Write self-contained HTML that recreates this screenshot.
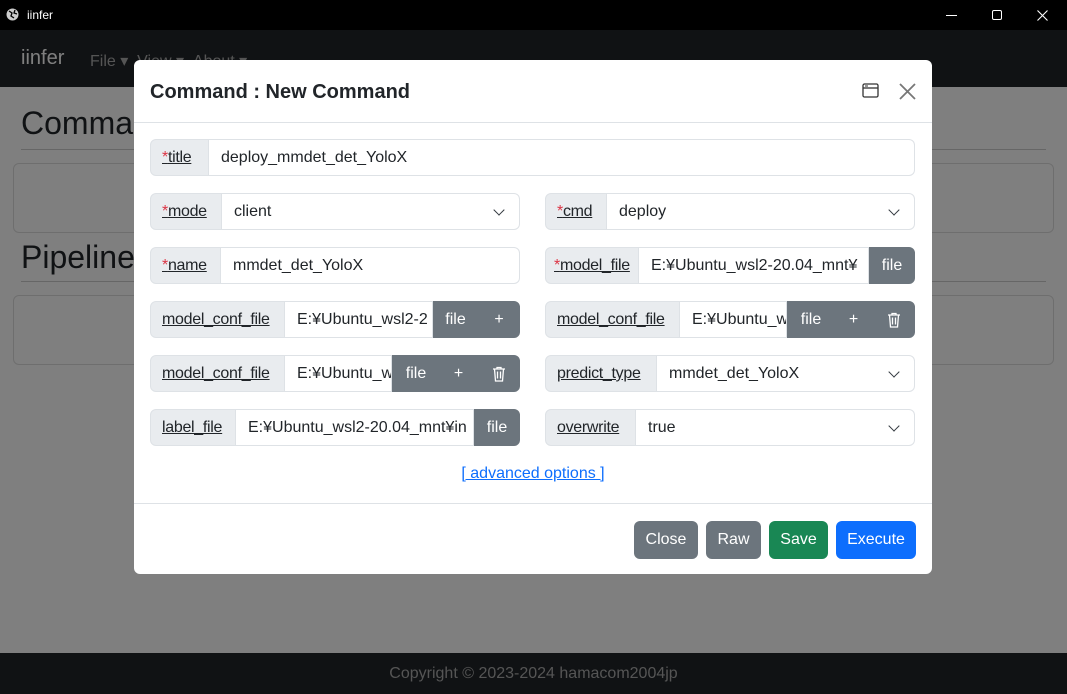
<!DOCTYPE html>
<html><head><meta charset="utf-8"><style>
*{box-sizing:border-box;margin:0;padding:0}
body{width:1067px;height:694px;overflow:hidden;background:#fff;font-family:"Liberation Sans",sans-serif;position:relative;color:#212529}
.tb{position:absolute;left:0;top:0;width:1067px;height:30px;background:#000;color:#fff;font-size:12px}
.nav{position:absolute;left:0;top:30px;width:1067px;height:57px;background:#212529}
.page{position:absolute;left:0;top:87px;width:1067px;height:566px;background:#fff}
.foot{position:absolute;left:0;top:653px;width:1067px;height:41px;background:#212529;color:#aaa;font-size:16px;text-align:center;line-height:41px}
.ov{position:absolute;left:0;top:30px;width:1067px;height:664px;background:rgba(0,0,0,.5)}
.modal{position:absolute;left:134px;top:60px;width:798px;height:514px;background:#fff;border-radius:6px}
.g{position:absolute;height:37px;display:flex;font-size:16px}
.g>div{height:37px;line-height:35px;border:1px solid #dee2e6;white-space:nowrap;overflow:hidden}
.l{background:#e9ecef;padding:0 11px;text-decoration:underline;color:#212529;border-radius:6px 0 0 6px;letter-spacing:-0.3px;flex:none}
.l span{color:#dc3545}
.i{background:#fff;padding:0 12px;border-left:none!important;flex:none}
.i.e{border-radius:0 6px 6px 0}
.s{position:relative}
.s:after{content:"";position:absolute;right:16px;top:12px;width:7px;height:7px;border-right:1.6px solid #343a40;border-bottom:1.6px solid #343a40;transform:rotate(45deg)}
.b{background:#6c757d!important;border-color:#6c757d!important;color:#fff;text-align:center;flex:none}
.b.e{border-radius:0 6px 6px 0}
.b svg{margin-top:10px}
.btn{position:absolute;top:521px;height:38px;line-height:38px;color:#fff;border-radius:6px;font-size:16px;text-align:center}
</style></head><body>
<div class="tb"><svg style="position:absolute;left:6px;top:8px" width="13" height="13" viewBox="0 0 13 13"><circle cx="6.5" cy="6.5" r="6" fill="#ccc"/><path d="M3 3l3 2-1 3 3 2M9 2l-1 3 3 1" stroke="#000" stroke-width="1.3" fill="none"/></svg><span style="position:absolute;left:27px;top:8px">iinfer</span>
<div style="position:absolute;left:946px;top:15px;width:11px;border-top:1px solid #fff"></div>
<div style="position:absolute;left:992px;top:10px;width:10px;height:10px;border:1px solid #fff;border-radius:2px"></div>
<svg style="position:absolute;left:1037px;top:10px" width="11" height="11" viewBox="0 0 11 11"><path d="M0.5 0.5l10 10M10.5 0.5l-10 10" stroke="#fff" stroke-width="1.1"/></svg></div>
<div class="nav"><span style="position:absolute;left:21px;top:17px;font-size:20px;color:#fff">iinfer</span>
<span style="position:absolute;left:90px;top:21px;font-size:16px;color:#aaa">File ▾ &nbsp;View ▾ &nbsp;About ▾</span></div>
<div class="page">
<div style="position:absolute;left:21px;top:18px;font-size:32px;font-weight:500">Command</div>
<div style="position:absolute;left:21px;top:62px;width:1025px;border-top:1px solid #ccc"></div>
<div style="position:absolute;left:13px;top:76px;width:1041px;height:70px;border:1px solid #ddd;border-radius:6px"></div>
<div style="position:absolute;left:21px;top:152px;font-size:32px;font-weight:500">Pipeline</div>
<div style="position:absolute;left:21px;top:194px;width:1025px;border-top:1px solid #ccc"></div>
<div style="position:absolute;left:13px;top:208px;width:1041px;height:70px;border:1px solid #ddd;border-radius:6px"></div>
</div>
<div class="foot">Copyright © 2023-2024 hamacom2004jp</div>
<div class="ov"></div>
<div class="modal">
<div style="position:absolute;left:16px;top:21px;font-size:20px;font-weight:bold;color:#212529">Command : New Command</div>
<svg style="position:absolute;left:728px;top:23px" width="17" height="15" viewBox="0 0 17 15"><rect x="1" y="1" width="15" height="13" rx="1.5" fill="none" stroke="#333" stroke-width="1.3"/><path d="M1 5h15" stroke="#333" stroke-width="1.3"/><path d="M3 3h3" stroke="#333"/></svg>
<svg style="position:absolute;left:765px;top:23px" width="17" height="17" viewBox="0 0 17 17"><path d="M1 1l15 15M16 1L1 16" stroke="#777" stroke-width="1.8"/></svg>
<div style="position:absolute;left:0;top:62px;width:798px;border-top:1px solid #dee2e6"></div>
<div style="position:absolute;left:0;top:443px;width:798px;border-top:1px solid #dee2e6"></div>
<div style="position:absolute;left:0;top:405px;width:798px;text-align:center;font-size:16px;color:#0d6efd;text-decoration:underline">[ advanced options ]</div>
</div>
<div style="position:absolute;left:0;top:0">
<div class="g" style="left:150px;top:139px"><div class="l" style="width:59px"><span>*</span>title</div><div class="i e" style="width:706px">deploy_mmdet_det_YoloX</div></div>
<div class="g" style="left:150px;top:193px"><div class="l" style="width:72px"><span>*</span>mode</div><div class="i e s" style="width:298px">client</div></div>
<div class="g" style="left:545px;top:193px"><div class="l" style="width:62px"><span>*</span>cmd</div><div class="i e s" style="width:308px">deploy</div></div>
<div class="g" style="left:150px;top:247px"><div class="l" style="width:71px"><span>*</span>name</div><div class="i e" style="width:299px">mmdet_det_YoloX</div></div>
<div class="g" style="left:545px;top:247px"><div class="l" style="width:94px;padding:0 8px"><span>*</span>model_file</div><div class="i" style="width:230px">E:¥Ubuntu_wsl2-20.04_mnt¥</div><div class="b e" style="width:46px">file</div></div>
<div class="g" style="left:150px;top:301px"><div class="l" style="width:135px">model_conf_file</div><div class="i" style="width:148px">E:¥Ubuntu_wsl2-2</div><div class="b" style="width:45px">file</div><div class="b e" style="width:42px">+</div></div>
<div class="g" style="left:545px;top:301px"><div class="l" style="width:135px">model_conf_file</div><div class="i" style="width:107px">E:¥Ubuntu_w</div><div class="b" style="width:48px">file</div><div class="b" style="width:37px">+</div><div class="b e" style="width:43px"><svg width="14" height="16" viewBox="0 0 14 16"><path d="M1 3h12M5 3V1.5h4V3M2.5 3l1 12h7l1-12M5.5 5.5v7M8.5 5.5v7" fill="none" stroke="#fff" stroke-width="1.3"/></svg></div></div>
<div class="g" style="left:150px;top:355px"><div class="l" style="width:135px">model_conf_file</div><div class="i" style="width:107px">E:¥Ubuntu_w</div><div class="b" style="width:48px">file</div><div class="b" style="width:37px">+</div><div class="b e" style="width:43px"><svg width="14" height="16" viewBox="0 0 14 16"><path d="M1 3h12M5 3V1.5h4V3M2.5 3l1 12h7l1-12M5.5 5.5v7M8.5 5.5v7" fill="none" stroke="#fff" stroke-width="1.3"/></svg></div></div>
<div class="g" style="left:545px;top:355px"><div class="l" style="width:112px">predict_type</div><div class="i e s" style="width:258px">mmdet_det_YoloX</div></div>
<div class="g" style="left:150px;top:409px"><div class="l" style="width:86px">label_file</div><div class="i" style="width:238px">E:¥Ubuntu_wsl2-20.04_mnt¥in</div><div class="b e" style="width:46px">file</div></div>
<div class="g" style="left:545px;top:409px"><div class="l" style="width:91px">overwrite</div><div class="i e s" style="width:279px">true</div></div>
</div>
<div class="btn" style="left:634px;width:64px;background:#6c757d">Close</div>
<div class="btn" style="left:706px;width:55px;background:#6c757d">Raw</div>
<div class="btn" style="left:769px;width:59px;background:#198754">Save</div>
<div class="btn" style="left:836px;width:80px;background:#0d6efd">Execute</div>
</body></html>
